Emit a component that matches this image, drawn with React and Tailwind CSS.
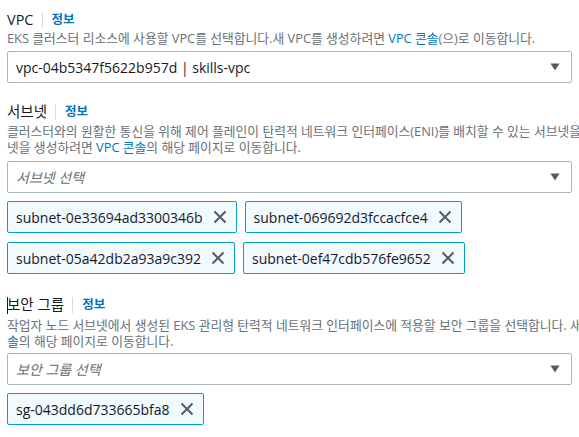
const font = { fontFamily: '"Open Sans", "Noto Sans CJK KR", sans-serif' }

function Label({ children, cursor }) {
  return (
    <div className="flex items-center h-5 text-[14px] leading-5 text-[#16191f]">
      {cursor && <span className="inline-block w-px h-[17px] bg-[#16191f] -mr-px" />}
      <span className="text-[14.5px]">{children}</span>
      <span className="ml-2 mr-[9px] h-4 w-px bg-[#d5dbdb]" />
      <span className="text-[12.5px] font-bold text-[#0073bb]">정보</span>
    </div>
  )
}

function Caret() {
  return (
    <svg width="10" height="8" viewBox="0 0 10 8" className="shrink-0">
      <path d="M0.5 0.5 L9.5 0.5 L5 7.5 Z" fill="#545b64" />
    </svg>
  )
}

function Select({ value, placeholder }) {
  return (
    <div className="w-[565px] h-8 border border-[#aab7b8] rounded-[2px] bg-white flex items-center justify-between pl-[8px] pr-[11px]">
      {value ? (
        <span className="text-[14px] text-[#16191f]">{value}</span>
      ) : (
        <span className="text-[14px] italic text-[#687078]">{placeholder}</span>
      )}
      <Caret />
    </div>
  )
}

function Token({ label }) {
  return (
    <div className="h-8 border border-[#00a1c9] rounded-[2px] bg-[#f1faff] flex items-center pl-[8px] pr-[9px] gap-[10px]">
      <span className="text-[14px] text-[#16191f]">{label}</span>
      <svg width="14" height="14" viewBox="0 0 14 14">
        <path d="M1.5 1.5 L12.5 12.5 M12.5 1.5 L1.5 12.5" stroke="#545b64" strokeWidth="2" />
      </svg>
    </div>
  )
}

function Desc({ children }) {
  return <div className="text-[12.8px] leading-4 text-[#687078] whitespace-nowrap">{children}</div>
}

const Link = ({ children }) => <span className="text-[#0073bb]">{children}</span>

export default function App() {
  return (
    <div style={font} className="w-[579px] h-[437px] overflow-hidden bg-white pl-[7px] pt-[10px]">
      {/* VPC */}
      <Label>VPC</Label>
      <Desc>
        EKS 클러스터 리소스에 사용할 VPC를 선택합니다.새 VPC를 생성하려면 <Link>VPC 콘솔</Link>(으)로 이동합니다.
      </Desc>
      <div className="mt-[5px]">
        <Select value="vpc-04b5347f5622b957d | skills-vpc" />
      </div>

      {/* Subnets */}
      <div className="mt-[19px]">
        <Label>서브넷</Label>
        <div className="mt-px">
          <Desc>클러스터와의 원활한 통신을 위해 제어 플레인이 탄력적 네트워크 인터페이스(ENI)를 배치할 수 있는 서브넷을</Desc>
          <Desc>
            넷을 생성하려면 <Link>VPC 콘솔</Link>의 해당 페이지로 이동합니다.
          </Desc>
        </div>
        <div className="mt-[6px]">
          <Select placeholder="서브넷 선택" />
        </div>
        <div className="mt-[8px] flex gap-2">
          <Token label="subnet-0e33694ad3300346b" />
          <Token label="subnet-069692d3fccacfce4" />
        </div>
        <div className="mt-[9px] flex gap-2">
          <Token label="subnet-05a42db2a93a9c392" />
          <Token label="subnet-0ef47cdb576fe9652" />
        </div>
      </div>

      {/* Security group */}
      <div className="mt-[21px]">
        <Label cursor>보안 그룹</Label>
        <div className="mt-[2px]">
          <Desc>작업자 노드 서브넷에서 생성된 EKS 관리형 탄력적 네트워크 인터페이스에 적용할 보안 그룹을 선택합니다. 새</Desc>
          <Desc>
            <Link>솔</Link>의 해당 페이지로 이동합니다.
          </Desc>
        </div>
        <div className="mt-[4px]">
          <Select placeholder="보안 그룹 선택" />
        </div>
        <div className="mt-[8px] flex">
          <Token label="sg-043dd6d733665bfa8" />
        </div>
      </div>
    </div>
  )
}
